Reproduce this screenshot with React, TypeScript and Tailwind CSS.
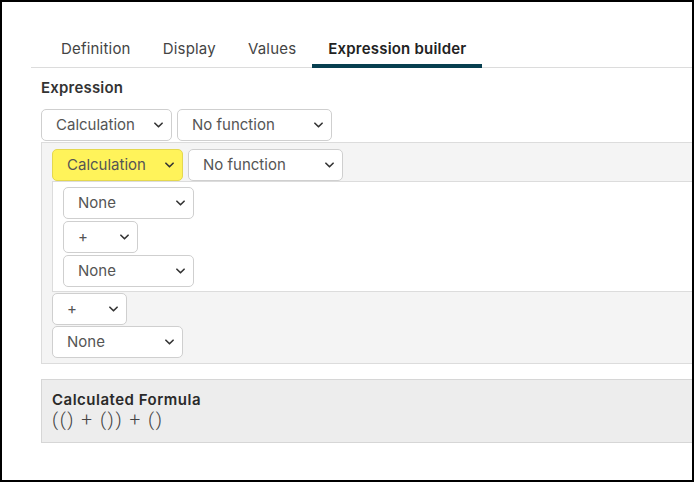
import { FC } from "react";

const font = { fontFamily: "Inter, 'Noto Sans', sans-serif" };

interface PickerProps {
  value: string;
  options: string[];
  width: string;
  highlight?: boolean;
}

// native select with the browser arrow hidden and our own chevron on top
const Picker: FC<PickerProps> = ({ value, options, width, highlight }) => {
  return (
    <div className={`relative ${width}`}>
      <select
        defaultValue={value}
        className={`appearance-none w-full h-[32px] rounded-[5px] border pl-[14px] pr-6 text-[15px] text-[#555] outline-none ${
          highlight
            ? "bg-[#fff35a] border-[#e4d84e]"
            : "bg-white border-[#cfcfcf]"
        }`}
      >
        {options.map((o) => (
          <option key={o}>{o}</option>
        ))}
      </select>
      <svg
        viewBox="0 0 10 6"
        className="absolute right-[9px] top-[13px] w-[9px] h-[6px] pointer-events-none"
        fill="none"
        stroke="#333"
        strokeWidth={1.8}
        strokeLinecap="round"
        strokeLinejoin="round"
      >
        <path d="M1 1l4 4 4-4" />
      </svg>
    </div>
  );
};

const kinds = ["Calculation", "Value", "Field"];
const funcs = ["No function", "Sum", "Average", "Round"];
const fields = ["None", "Price", "Quantity"];
const ops = ["+", "-", "*", "/"];

const tabs = ["Definition", "Display", "Values", "Expression builder"];

const App: FC = () => {
  return (
    <div
      style={font}
      className="w-[694px] h-[482px] border-2 border-black bg-white overflow-hidden"
    >
      <div className="pl-[29px] pt-[36px] w-[900px]">
        <div className="flex border-b border-[#dcdcdc] pl-[14px]">
          {tabs.map((t, i) => (
            <div
              key={t}
              className={`px-[16px] pb-[3px] text-[15px] tracking-[0.2px] -mb-px ${
                i === 3
                  ? "font-semibold text-[#222] border-b-4 border-[#073f50]"
                  : "text-[#444] border-b-4 border-transparent"
              }`}
            >
              {t}
            </div>
          ))}
        </div>

        <div className="pl-[10px]">
          <h3 className="text-[15px] font-semibold tracking-[0.2px] text-[#333] mt-[9px] mb-[10px]">
            Expression
          </h3>

          <div className="flex gap-[5px]">
            <Picker value="Calculation" options={kinds} width="w-[131px]" />
            <Picker value="No function" options={funcs} width="w-[155px]" />
          </div>

          <div className="mt-px bg-[#f4f4f4] border border-[#dcdcdc] pl-[10px] pt-[6px] pb-[5px]">
            <div className="flex gap-[5px]">
              <Picker
                value="Calculation"
                options={kinds}
                width="w-[131px]"
                highlight
              />
              <Picker value="No function" options={funcs} width="w-[155px]" />
            </div>

            <div className="bg-white border border-[#dcdcdc] pl-[10px] pt-[5px] pb-[4px] flex flex-col gap-[2px]">
              <Picker value="None" options={fields} width="w-[131px]" />
              <Picker value="+" options={ops} width="w-[75px]" />
              <Picker value="None" options={fields} width="w-[131px]" />
            </div>

            <div className="flex flex-col gap-px mt-px">
              <Picker value="+" options={ops} width="w-[75px]" />
              <Picker value="None" options={fields} width="w-[131px]" />
            </div>
          </div>

          <div className="mt-[15px] bg-[#ededed] border border-[#d6d6d6] pl-[10px] pt-[10px] pb-[12px]">
            <div className="text-[15px] font-semibold tracking-[0.5px] text-[#2a2a2a] leading-[20px]">
              Calculated Formula
            </div>
            <div
              className="text-[19px] text-[#444] leading-[20px] font-light tracking-[1.6px]"
              style={{ fontFamily: "Roboto, sans-serif" }}
            >
              (() + ()) + ()
            </div>
          </div>
        </div>
      </div>
    </div>
  );
};

export default App;
